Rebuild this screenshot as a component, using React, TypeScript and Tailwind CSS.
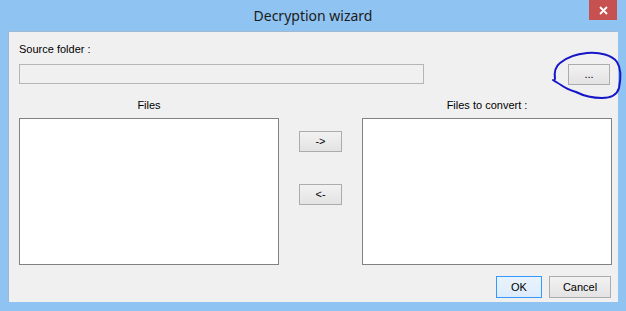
function WinButton({ label, className = "" }: { label: string; className?: string }) {
  return (
    <button
      className={
        "h-[21px] border border-[#acacac] bg-gradient-to-b from-[#f2f2f2] to-[#e3e3e3] text-[11px] leading-none text-black " +
        className
      }
    >
      {label}
    </button>
  );
}

function App() {
  return (
    <div className="relative w-[626px] h-[311px] bg-[#8fc3f1] flex flex-col font-['Liberation_Sans',Arial,sans-serif]">
      {/* title bar */}
      <div className="relative h-[31px] flex items-center justify-center">
        <span className="font-['Noto_Sans',sans-serif] text-[14px] text-[#1b1b1b] pb-[1px]">Decryption wizard</span>
        <div className="absolute right-[9px] top-0 w-[28px] h-[20px] bg-[#c75050] flex items-center justify-center">
          <svg width="9" height="9" viewBox="0 0 9 9">
            <path d="M1 1 L8 8 M8 1 L1 8" stroke="white" strokeWidth="1.8" />
          </svg>
        </div>
      </div>

      <div className="flex-1 flex px-[8px] pb-[9px]">
        <div className="flex-1 bg-[#f0f0f0] border-l border-t border-[#9fb9d3] pl-[10px] pr-[5px] pt-[9px] text-[11px] text-black flex flex-col">
          <div className="h-[16px] leading-[16px]">Source folder :</div>

          <div className="mt-[7px] flex items-start">
            <div className="w-[405px] h-[20px] border border-[#b5b5b5] bg-[#f0f0f0]" />
            <WinButton label="..." className="ml-[144px] w-[42px]" />
          </div>

          <div className="mt-[12px] flex h-[16px] leading-[16px]">
            <div className="w-[260px] text-center">Files</div>
            <div className="w-[83px]" />
            <div className="w-[250px] text-center">Files to convert :</div>
          </div>

          <div className="mt-[5px] flex">
            <div className="w-[260px] h-[147px] bg-white border border-[#828282]" />
            <div className="w-[83px] flex flex-col items-center pt-[13px] gap-[32px]">
              <WinButton label="->" className="w-[43px]" />
              <WinButton label="<-" className="w-[43px]" />
            </div>
            <div className="w-[250px] h-[147px] bg-white border border-[#828282]" />
          </div>

          <div className="mt-[11px] flex justify-end gap-[7px] pr-[2px]">
            <button className="w-[46px] h-[22px] border border-[#3399ff] bg-gradient-to-b from-[#eaf3fc] to-[#dcecfc] text-[11px] leading-none text-black">
              OK
            </button>
            <WinButton label="Cancel" className="w-[62px] h-[22px]" />
          </div>
        </div>
      </div>

      {/* hand-drawn annotation around the browse button */}
      <svg className="absolute left-0 top-0 pointer-events-none" width="626" height="311">
        <path
          d="M555 79 C554 72 556 66 560 63 C566 58 576 54 587 53 C600 52 612 55 617 62 C621 68 621 78 619 88 C617 95 610 98 602 98 C592 98 582 95 576 92 C570 90 565 88 561 85 C558 83 556 82 553 80"
          fill="none"
          stroke="#1616c8"
          strokeWidth="2"
          strokeLinecap="round"
        />
      </svg>
    </div>
  );
}

export default App;
